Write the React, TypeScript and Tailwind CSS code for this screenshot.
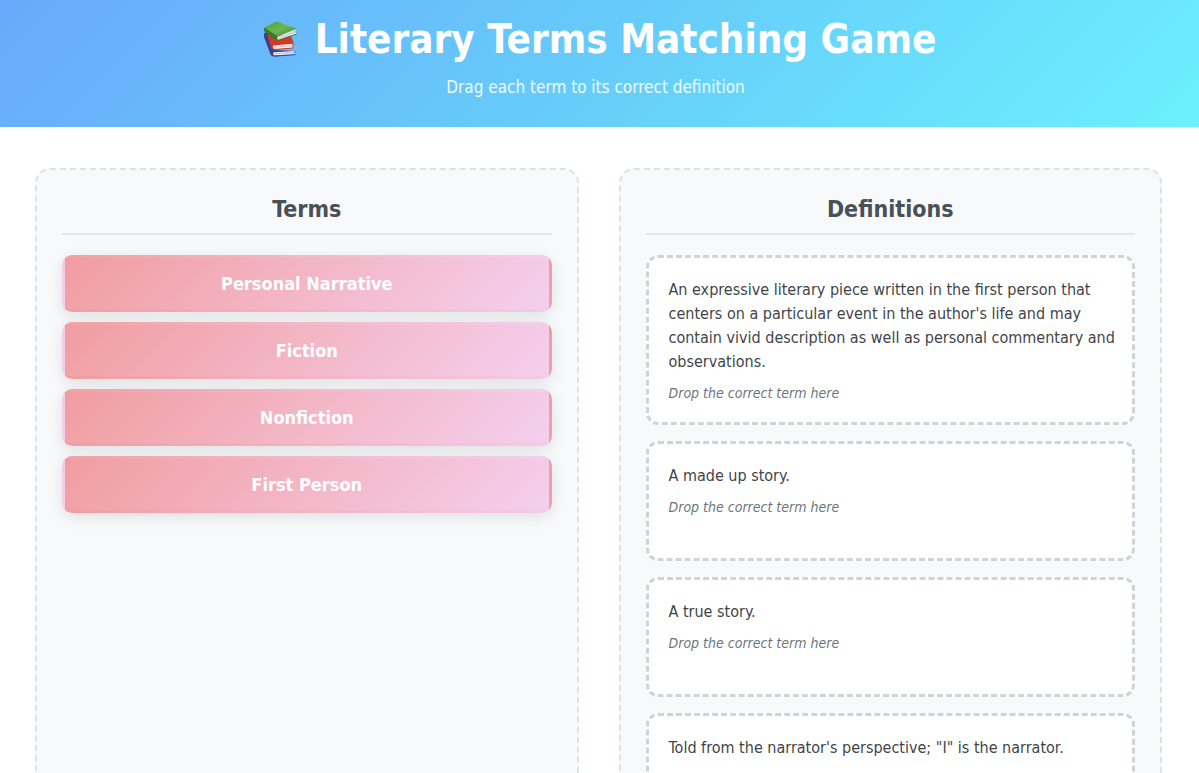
const terms: string[] = ["Personal Narrative", "Fiction", "Nonfiction", "First Person"];

const definitions: string[] = [
  "An expressive literary piece written in the first person that centers on a particular event in the author's life and may contain vivid description as well as personal commentary and observations.",
  "A made up story.",
  "A true story.",
  "Told from the narrator's perspective; \"I\" is the narrator.",
];

function Books() {
  return (
    <svg viewBox="0 0 52 50" className="h-[50px] w-[52px] shrink-0" aria-hidden="true">
      <defs>
        <linearGradient id="green" x1="0" y1="0" x2="1" y2="1">
          <stop offset="0" stopColor="#4f9a3c" />
          <stop offset="0.5" stopColor="#6cb84e" />
          <stop offset="1" stopColor="#3f8732" />
        </linearGradient>
      </defs>
      <path d="M9 19.5 C9.6 18.4 11 18.4 13 19 L20 36 L40 37 L40.4 38.6 L19.4 42.6 C16.6 42.6 15.6 41 15 39 L9 23 Z" fill="#38408f" />
      <path d="M18.6 38.2 L39.6 37 C39 38.2 39.2 39.2 39.8 40.2 L19.8 41.6 C18 41 17.6 39.4 18.6 38.2 Z" fill="#eae9f0" />
      <path d="M18.6 39.8 L39.2 38.5" stroke="#aaa8ba" strokeWidth="0.6" />
      <path d="M19.6 42.2 L40.4 40.6" stroke="#38408f" strokeWidth="1" />
      <path d="M13 18 L36 22 L38.6 28.4 L38.2 34.6 L19.4 36 C16.8 35.6 16 34 15.6 32 L12.8 22 Z" fill="#cf3a2a" />
      <path d="M18.4 31.4 L37.6 29.8 C37 31 37.2 32.4 37.8 33.6 L19.4 34.9 C17.6 34.2 17.2 32.6 18.4 31.4 Z" fill="#f3efec" />
      <path d="M18.3 33.2 L37.2 31.7" stroke="#bab1ac" strokeWidth="0.6" />
      <path d="M9.4 13.6 L21.6 7.4 L41.6 14.4 L22.5 22.2 Z" fill="url(#green)" />
      <path d="M9.4 13.6 C8.6 15 8.9 17 10 18 L21.6 26.4 C22 27 23 27 24 26.6 L42 20.2 L41.8 19.4 L22.8 25.6 L22.5 22.2 Z" fill="#347b2a" />
      <path d="M23 22.4 L40.8 15.4 C39.9 17 40.2 18.5 41.4 19.4 L23.2 25.8 C21.8 25 21.8 23.2 23 22.4 Z" fill="#eeefe7" />
      <path d="M22.8 23.7 L40.4 17 M22.9 24.8 L40.6 18.4" stroke="#aeb4a4" strokeWidth="0.5" />
    </svg>
  );
}

function PanelTitle({ children }: { children: string }) {
  return (
    <h2 className="mb-5 border-b-2 border-[#e5e7eb] pb-[10px] text-center text-[23px] leading-7 font-bold text-[#495057]">
      {children}
    </h2>
  );
}

export default function App() {
  return (
    <div className="min-h-screen bg-white font-['DejaVu_Sans_Condensed','Noto_Sans',sans-serif]">
      <header className="bg-linear-135 from-[#69a9fb] via-[#66ccf9] to-[#6cf0fe] pt-3 pr-10 pb-[27px] pl-8 text-center text-white">
        <h1 className="flex items-center justify-center gap-2 text-[40px] leading-[54px] font-bold">
          <Books />
          Literary Terms Matching Game
        </h1>
        <p className="mt-2 text-[17px] leading-[26px] text-white/90">Drag each term to its correct definition</p>
      </header>

      <main className="grid grid-cols-2 gap-10 pt-[41px] pr-[37px] pb-10 pl-[35px]">
        <section className="rounded-[15px] border-2 border-dashed border-[#dee2e6] bg-[#f8f9fb] p-[25px]">
          <PanelTitle>Terms</PanelTitle>
          <div className="flex flex-col gap-[10px]">
            {terms.map((term) => (
              <button
                key={term}
                type="button"
                draggable
                className="cursor-grab rounded-[10px] border-3 border-transparent bg-linear-135 from-[#f09d9f] to-[#f4cfee] px-5 py-3 text-lg leading-[27px] font-bold text-white shadow-[0_4px_15px_rgba(0,0,0,0.1)]"
              >
                {term}
              </button>
            ))}
          </div>
        </section>

        <section className="rounded-[15px] border-2 border-dashed border-[#dee2e6] bg-[#f8f9fb] p-[25px]">
          <PanelTitle>Definitions</PanelTitle>
          <div className="flex flex-col gap-4">
            {definitions.map((definition) => (
              <div key={definition} className="min-h-[120px] rounded-xl border-3 border-dashed border-[#d0d4d8] bg-white pt-5 pr-2 pb-[18px] pl-5">
                <p className="text-base leading-6 text-[#414549]">{definition}</p>
                <p className="mt-2 text-sm leading-[22px] text-[#6c757d] italic">Drop the correct term here</p>
              </div>
            ))}
          </div>
        </section>
      </main>
    </div>
  );
}
